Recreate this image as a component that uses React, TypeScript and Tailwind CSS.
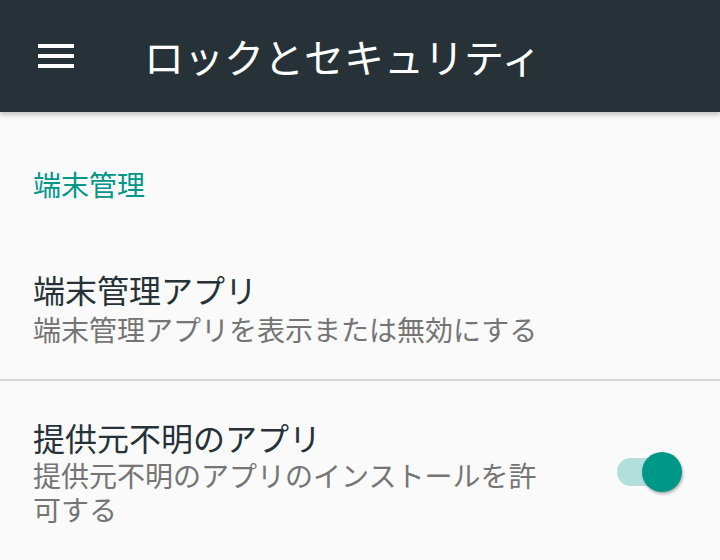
export default function App() {
  return (
    <div
      className="w-[720px] h-[560px] overflow-hidden bg-[#fafafa]"
      style={{ fontFamily: '"Noto Sans CJK JP", "Noto Sans", sans-serif' }}
    >
      <header className="relative z-10 flex h-[112px] items-center bg-[#263238] shadow-[0_3px_5px_rgba(0,0,0,0.22)]">
        <div className="ml-[38px] flex w-[36px] flex-col gap-[6px]">
          <span className="h-[4px] bg-white" />
          <span className="h-[4px] bg-white" />
          <span className="h-[4px] bg-white" />
        </div>
        <h1 className="ml-[70px] text-[40px] leading-[48px] text-white">ロックとセキュリティ</h1>
      </header>

      <div className="px-[33px] pt-[52px] text-[28px] leading-[40px] text-[#009688]">端末管理</div>

      <div className="px-[33px] pt-[66px] pb-[33px]">
        <div className="text-[32px] leading-[38px] text-[#263238]">端末管理アプリ</div>
        <div className="mt-[4px] text-[28px] leading-[34px] text-[#757575]">
          端末管理アプリを表示または無効にする
        </div>
      </div>

      <div className="h-[2px] bg-[#d6d6d6]" />

      <div className="flex items-center pl-[33px] pr-[39px] pt-[37px]">
        <div className="w-[510px]">
          <div className="text-[32px] leading-[38px] text-[#263238]">提供元不明のアプリ</div>
          <div className="mt-[2px] text-[28px] leading-[34px] text-[#757575]">
            提供元不明のアプリのインストールを許可する
          </div>
        </div>
        <div className="ml-auto flex items-center">
          <div className="relative h-[28px] w-[64px] rounded-full bg-[#b2dfdb]">
            <div className="absolute right-[-1px] top-[-6px] h-[40px] w-[40px] rounded-full bg-[#009688] shadow-[1px_2px_3px_rgba(0,0,0,0.3)]" />
          </div>
        </div>
      </div>
    </div>
  );
}
